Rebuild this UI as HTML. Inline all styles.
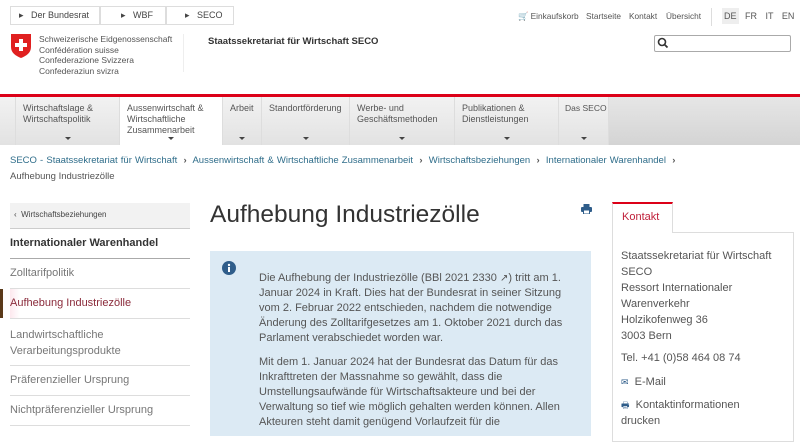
<!DOCTYPE html>
<html><head><meta charset="utf-8"><style>
*{margin:0;padding:0;box-sizing:border-box}
body{width:800px;height:436px;overflow:hidden;background:#fff;font-family:"Liberation Sans","DejaVu Sans",sans-serif;color:#555;position:relative}
.a{position:absolute;white-space:nowrap}
.crumb{top:6px;height:19px;border:1px solid #ddd;background:#fff;font-size:9px;color:#444;line-height:17px}
.tl{position:absolute;top:11px;font-size:8.3px;color:#555;white-space:nowrap}
.nav{position:absolute;top:97px;height:48px;background:linear-gradient(#f2f2f2,#e2e2e2);font-size:9px;color:#555;line-height:11px;padding:6px 0 0 7px;border-right:1px solid #ddd;white-space:nowrap}
.nav .c{position:absolute;bottom:5px;left:50%;margin-left:-3px;width:0;height:0;border-left:3px solid transparent;border-right:3px solid transparent;border-top:3px solid #444}
.side{position:absolute;left:10px;width:180px;font-size:11px;color:#777;border-bottom:1px solid #ddd}
.bt{font-size:11px;line-height:15px;color:#555}
.ct{font-size:11px;line-height:16px;color:#555}
</style></head><body>
<div class="a crumb" style="left:10px;width:90px;padding-left:8px">▸&nbsp;&nbsp;&nbsp;Der Bundesrat</div>
<div class="a crumb" style="left:100px;width:66px;padding-left:20px">▸&nbsp;&nbsp;&nbsp;WBF</div>
<div class="a crumb" style="left:166px;width:68px;padding-left:18px">▸&nbsp;&nbsp;&nbsp;SECO</div>
<div class="tl" style="left:518px">🛒 Einkaufskorb</div>
<div class="tl" style="left:586px">Startseite</div>
<div class="tl" style="left:629px">Kontakt</div>
<div class="tl" style="left:666px">Übersicht</div>
<div class="a" style="left:711px;top:8px;width:1px;height:18px;background:#ddd"></div>
<div class="a" style="left:722px;top:8px;width:17px;height:16px;background:#eee"></div>
<div class="a" style="left:724px;top:11px;font-size:9px;color:#555;word-spacing:6px">DE FR IT EN</div>
<div class="a" style="left:654px;top:35px;width:137px;height:17px;border:1px solid #aaa;border-radius:2px"></div>
<svg class="a" style="left:657px;top:37px" width="12" height="12"><circle cx="5" cy="5" r="3.5" fill="none" stroke="#333" stroke-width="1.6"/><line x1="7.5" y1="7.5" x2="10.5" y2="10.5" stroke="#333" stroke-width="1.8"/></svg>
<svg class="a" style="left:10px;top:33px" width="22" height="26"><path d="M1 1H21V14C21 20 16 23 11 25C6 23 1 20 1 14Z" fill="#e02020"/><path d="M9 6h4v4h4v4h-4v4h-4v-4h-4v-4h4z" fill="#fff"/></svg>
<div class="a" style="left:39px;top:34px;font-size:8.5px;line-height:10.5px;color:#555;white-space:normal;width:150px">Schweizerische Eidgenossenschaft<br>Confédération suisse<br>Confederazione Svizzera<br>Confederaziun svizra</div>
<div class="a" style="left:183px;top:34px;width:1px;height:38px;background:#eee"></div>
<div class="a" style="left:208px;top:36px;font-size:9.5px;font-weight:bold;color:#333">Staatssekretariat für Wirtschaft SECO</div>
<div class="a" style="left:0;top:94px;width:800px;height:3px;background:#dc0018"></div>
<div class="nav" style="left:0;width:16px;padding:0"></div>
<div class="nav" style="left:16px;width:104px">Wirtschaftslage &amp;<br>Wirtschaftspolitik<span class="c"></span></div>
<div class="nav" style="left:120px;width:103px;background:#fff">Aussenwirtschaft &amp;<br>Wirtschaftliche<br>Zusammenarbeit<span class="c"></span></div>
<div class="nav" style="left:223px;width:39px">Arbeit<span class="c"></span></div>
<div class="nav" style="left:262px;width:88px">Standortförderung<span class="c"></span></div>
<div class="nav" style="left:350px;width:105px">Werbe- und<br>Geschäftsmethoden<span class="c"></span></div>
<div class="nav" style="left:455px;width:104px">Publikationen &amp;<br>Dienstleistungen<span class="c"></span></div>
<div class="nav" style="left:559px;width:50px;padding-left:6px;font-size:8.5px">Das SECO<span class="c"></span></div>
<div class="nav" style="left:609px;width:191px;padding:0;border:0;background:linear-gradient(#e6e6e6,#d4d4d4)"></div>
<div class="a" style="left:10px;top:155px;font-size:9.5px;color:#2f6d8a;word-spacing:0.5px">SECO - Staatssekretariat für Wirtschaft &nbsp;<b style="color:#555">›</b>&nbsp; Aussenwirtschaft &amp; Wirtschaftliche Zusammenarbeit &nbsp;<b style="color:#555">›</b>&nbsp; Wirtschaftsbeziehungen &nbsp;<b style="color:#555">›</b>&nbsp; Internationaler Warenhandel &nbsp;<b style="color:#555">›</b></div>
<div class="a" style="left:10px;top:171px;font-size:9.5px;color:#555">Aufhebung Industriezölle</div>
<div class="side" style="top:203px;height:26px;background:#f2f2f2;font-size:8px;color:#444;padding:7px 0 0 4px;border-bottom:1px solid #ccc">‹&nbsp; Wirtschaftsbeziehungen</div>
<div class="side" style="top:229px;height:30px;padding-top:8px;color:#333;font-weight:bold;border-bottom:1px solid #aaa">Internationaler Warenhandel</div>
<div class="side" style="top:259px;height:30px;padding-top:8px">Zolltarifpolitik</div>
<div class="side" style="top:289px;height:30px;padding-top:8px;color:#8a2a3a;background:linear-gradient(90deg,#fde8ee 0,#fff 10px)">Aufhebung Industriezölle</div>
<div class="a" style="left:0;top:289px;width:3px;height:29px;background:#5a3a1a"></div>
<div class="side" style="top:319px;height:47px;padding-top:8px;line-height:16px">Landwirtschaftliche<br>Verarbeitungsprodukte</div>
<div class="side" style="top:366px;height:30px;padding-top:8px">Präferenzieller Ursprung</div>
<div class="side" style="top:396px;height:30px;padding-top:8px">Nichtpräferenzieller Ursprung</div>
<div class="a" style="left:210px;top:201px;font-size:24.5px;color:#333">Aufhebung Industriezölle</div>
<svg class="a" style="left:581px;top:204px" width="11" height="10"><rect x="2.5" y="0" width="6" height="3" fill="#2f5d8a"/><rect x="0" y="3" width="11" height="5" rx="1" fill="#2f5d8a"/><rect x="2.5" y="6" width="6" height="4" fill="#fff" stroke="#2f5d8a"/></svg>
<div class="a" style="left:210px;top:251px;width:381px;height:185px;background:#dceaf4"></div>
<svg class="a" style="left:222px;top:261px" width="14" height="14"><circle cx="7" cy="7" r="7" fill="#2f5d8a"/><circle cx="7" cy="4" r="1.2" fill="#fff"/><rect x="6" y="6" width="2" height="5" fill="#fff"/></svg>
<div class="a bt" style="left:259px;top:271px">Die Aufhebung der Industriezölle (BBl 2021 2330 <span style="font-size:10px">↗</span>) tritt am 1.<br>Januar 2024 in Kraft. Dies hat der Bundesrat in seiner Sitzung<br>vom 2. Februar 2022 entschieden, nachdem die notwendige<br>Änderung des Zolltarifgesetzes am 1. Oktober 2021 durch das<br>Parlament verabschiedet worden war.</div>
<div class="a bt" style="left:259px;top:355px">Mit dem 1. Januar 2024 hat der Bundesrat das Datum für das<br>Inkrafttreten der Massnahme so gewählt, dass die<br>Umstellungsaufwände für Wirtschaftsakteure und bei der<br>Verwaltung so tief wie möglich gehalten werden können. Allen<br>Akteuren steht damit genügend Vorlaufzeit für die</div>
<div class="a" style="left:612px;top:232px;width:182px;height:210px;border:1px solid #ddd"></div>
<div class="a" style="left:612px;top:202px;width:61px;height:31px;background:#fff;border:1px solid #ddd;border-top:2px solid #dc0018;border-bottom:0;font-size:11px;color:#c0203a;padding:7px 0 0 9px">Kontakt</div>
<div class="a ct" style="left:621px;top:248px">Staatssekretariat für Wirtschaft<br>SECO<br>Ressort Internationaler<br>Warenverkehr<br>Holzikofenweg 36<br>3003 Bern</div>
<div class="a ct" style="left:621px;top:350px">Tel. +41 (0)58 464 08 74</div>
<div class="a ct" style="left:621px;top:374px"><span style="color:#2f5d8a;font-size:9px">✉</span>&nbsp; E-Mail</div>
<div class="a ct" style="left:621px;top:397px"><span style="color:#2f5d8a;font-size:9px">🖶</span>&nbsp; Kontaktinformationen<br>drucken</div>
</body></html>
